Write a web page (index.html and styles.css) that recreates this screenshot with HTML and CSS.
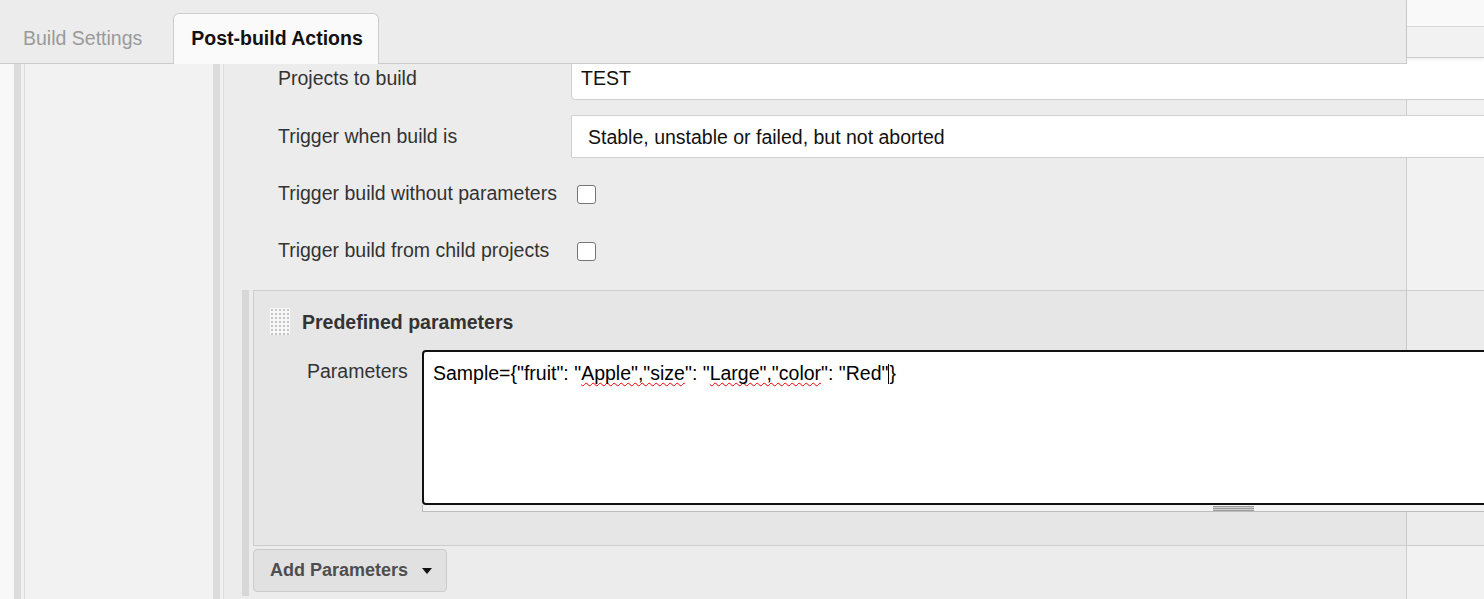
FILE: index.html
```html
<!DOCTYPE html>
<html>
<head>
<meta charset="utf-8">
<link rel="stylesheet" href="styles.css">
<title>Post-build Actions</title>
</head>
<body>
<div class="page">
  <div class="gutter"></div>
  <div class="stripe"></div>
  <div class="gap"></div>
  <div class="side"></div>
  <div class="stripe"></div>
  <div class="gap"></div>
  <main class="main">
    <div class="row">
      <div class="label">Projects to build</div>
      <div class="field input">TEST</div>
    </div>
    <div class="row">
      <div class="label">Trigger when build is</div>
      <div class="field select">Stable, unstable or failed, but not aborted</div>
    </div>
    <div class="row">
      <div class="label">Trigger build without parameters</div>
      <div class="check-cell"><span class="checkbox"></span></div>
    </div>
    <div class="row">
      <div class="label">Trigger build from child projects</div>
      <div class="check-cell"><span class="checkbox"></span></div>
    </div>

    <div class="section">
      <div class="section-box">
        <div class="section-head">
          <svg class="grip" width="20" height="27" viewBox="0 0 20 27">
            <defs>
              <pattern id="dots" x="0" y="0" width="4" height="4" patternUnits="userSpaceOnUse">
                <rect width="4" height="4" fill="#f7f7f7"/>
                <rect x="1" y="1" width="2" height="2" fill="#c4c4c4"/>
              </pattern>
            </defs>
            <rect x="0" y="0" width="20" height="27" fill="url(#dots)"/>
          </svg>
          <span class="section-title">Predefined parameters</span>
        </div>
        <div class="param-row">
          <div class="param-label">Parameters</div>
          <div class="param-field">
            <div class="textarea">Sample={"fruit": "<span class="typo">Apple","size</span>": "<span class="typo">Large","color</span>": "Red"<span class="caret"></span>}</div>
            <div class="resizer"><span class="handle"></span></div>
          </div>
        </div>
      </div>
      <button class="add-btn">Add Parameters <span class="tri"></span></button>
    </div>
  </main>
</div>

<header class="topbar">
  <nav class="tabs">
    <div class="tab">Build Settings</div>
    <div class="tab active">Post-build Actions</div>
  </nav>
  <div class="topbar-right">
    <div class="tr-top"></div>
    <div class="tr-mid"></div>
  </div>
</header>
</body>
</html>
```

FILE: styles.css
```css
* { box-sizing: border-box; }

html, body {
  margin: 0;
  padding: 0;
}

body {
  width: 1484px;
  height: 599px;
  overflow: hidden;
  position: relative;
  font-family: "Liberation Sans", Arial, sans-serif;
  font-size: 19.5px;
  color: #333;
  background: #f8f8f8;
}

.page {
  display: flex;
  height: 599px;
  width: 1484px;
  overflow: hidden;
}

.gutter { flex: 0 0 14px; background: #f8f8f8; }
.stripe { flex: 0 0 7px; background: #dcdcdc; }
.gap { flex: 0 0 3px; background: #f1f1f1; }
.side {
  flex: 0 0 189px;
  border-left: 1px solid #dedede;
  background: #f2f2f2;
}

.main {
  flex: 0 0 1320px;
  border-left: 1px solid #dedede;
  padding-top: 57px;
  background: linear-gradient(to right, #ececec 0, #ececec 1182px, #cdcdcd 1182px, #cdcdcd 1183px, #f2f2f2 1183px);
}

/* form rows */
.row {
  display: grid;
  grid-template-columns: 293px 1fr;
  align-items: center;
  height: 43px;
  padding-left: 54px;
  margin-bottom: 14px;
}
.row:first-child { margin-bottom: 15px; }

.label {
  color: #333;
  white-space: nowrap;
}

.field {
  height: 43px;
  background: #fff;
  border: 1px solid #cfcfcf;
  border-radius: 4px;
  display: flex;
  align-items: center;
  color: #111;
  white-space: nowrap;
}
.input { padding-left: 9px; }
.select { padding-left: 16px; border-radius: 1px; padding-top: 2px; }

.check-cell { display: flex; align-items: center; }
.checkbox {
  display: block;
  width: 19px;
  height: 19px;
  margin-left: 6px;
  margin-top: 1px;
  border: 1px solid #767676;
  border-radius: 3px;
  background: #fff;
}

/* section */
.section {
  margin-top: 18px;
  margin-left: 18px;
  border-left: 7px solid #d7d7d7;
  padding-left: 4px;
  padding-bottom: 4px;
}

.section-box {
  border-top: 1px solid #cdcdcd;
  border-left: 1px solid #cdcdcd;
  border-bottom: 1px solid #cdcdcd;
  background: rgba(0, 0, 0, 0.025);
  padding: 17px 0 33px 16px;
}

.section-head {
  display: flex;
  align-items: center;
  height: 27px;
}
.grip { display: block; flex: 0 0 20px; }
.section-title {
  margin-left: 12px;
  font-weight: bold;
  color: #333;
  position: relative;
  top: 1px;
}

.param-row {
  display: grid;
  grid-template-columns: 115px 1fr;
  margin-top: 15px;
  padding-left: 37px;
}
.param-label {
  padding-top: 10px;
  color: #333;
}

.textarea {
  height: 155px;
  background: #fff;
  border: 2px solid #111;
  border-radius: 4px;
  padding: 10px 9px;
  line-height: 22px;
  color: #000;
  white-space: nowrap;
}
.typo {
  text-decoration: underline wavy #e80000;
  text-decoration-thickness: 1px;
  text-underline-offset: 2px;
  text-decoration-skip-ink: none;
}
.caret {
  display: inline-block;
  width: 1px;
  height: 20px;
  background: #000;
  vertical-align: -4px;
}

.resizer {
  height: 7px;
  border-left: 1px solid #bdbdbd;
  border-bottom: 1px solid #bdbdbd;
  background: #f3f3f3;
  display: flex;
  align-items: flex-end;
}
.handle {
  display: block;
  width: 41px;
  height: 5px;
  margin-left: 790px;
  background: repeating-linear-gradient(to bottom, #9a9a9a 0, #9a9a9a 1px, #d0d0d0 1px, #d0d0d0 2px);
}

.add-btn {
  display: flex;
  align-items: center;
  margin-top: 3px;
  height: 43px;
  padding: 0 14px 0 16px;
  border: 1px solid #cbcbcb;
  border-radius: 4px;
  background: #e1e1e1;
  font-family: "Liberation Sans", Arial, sans-serif;
  font-size: 18px;
  font-weight: bold;
  color: #4e4e4e;
}
.tri {
  display: inline-block;
  margin-left: 14px;
  width: 0;
  height: 0;
  border-left: 5.5px solid transparent;
  border-right: 5.5px solid transparent;
  border-top: 6px solid #111;
}

/* sticky header lying over the content */
.topbar {
  position: absolute;
  top: 0;
  left: 0;
  width: 1484px;
  height: 64px;
  display: flex;
}
.tabs {
  flex: 0 0 1407px;
  height: 64px;
  background: #ececec;
  border-bottom: 1px solid #cccccc;
  border-right: 1px solid #cccccc;
  display: flex;
  align-items: flex-end;
  padding-left: 6px;
}
.tab {
  height: 50px;
  padding: 0 17px 2px;
  display: flex;
  align-items: center;
  color: #9a9a9a;
  white-space: nowrap;
  margin-bottom: -1px;
}
.tab.active {
  margin-left: 14px;
  height: 51px;
  background: #fafafa;
  border: 1px solid #cccccc;
  border-bottom: none;
  border-radius: 6px 6px 0 0;
  color: #111;
  font-weight: bold;
  padding: 0 15px 2px 17px;
}
.topbar-right {
  flex: 1 1 auto;
  height: 58px;
  box-shadow: 0 2px 3px rgba(0, 0, 0, 0.06);
}
.tr-top {
  height: 27px;
  background: #f9f9f9;
  border-bottom: 1px solid #d6d6d6;
}
.tr-mid {
  height: 31px;
  background: #f2f2f2;
  border-bottom: 1px solid #cccccc;
}
```
